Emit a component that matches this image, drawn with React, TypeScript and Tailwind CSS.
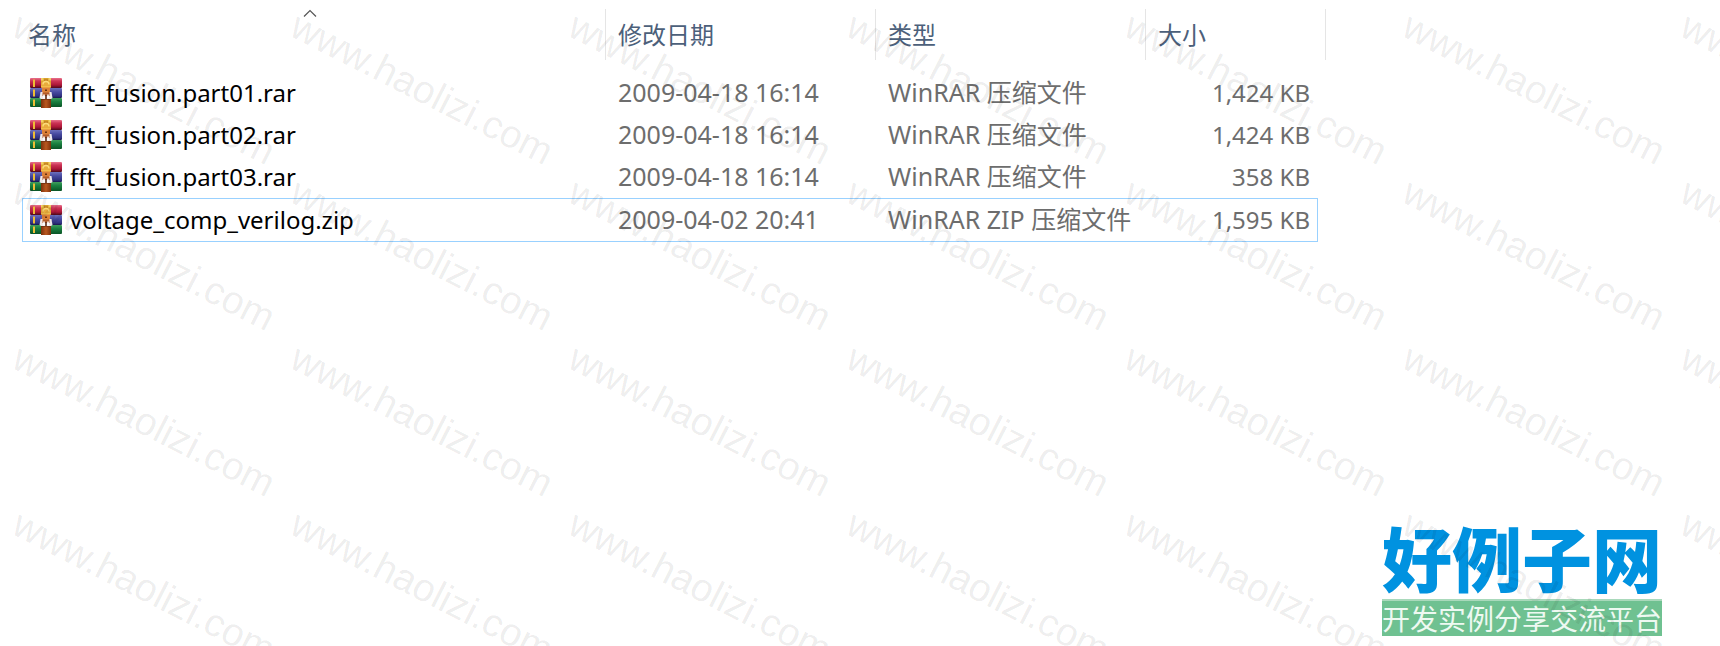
interface FileEntry {
  name: string;
  modified: string;
  type: string;
  size: string;
  focused?: boolean;
}

const files: FileEntry[] = [
  { name: 'fft_fusion.part01.rar', modified: '2009-04-18 16:14', type: 'WinRAR 压缩文件', size: '1,424 KB' },
  { name: 'fft_fusion.part02.rar', modified: '2009-04-18 16:14', type: 'WinRAR 压缩文件', size: '1,424 KB' },
  { name: 'fft_fusion.part03.rar', modified: '2009-04-18 16:14', type: 'WinRAR 压缩文件', size: '358 KB' },
  {
    name: 'voltage_comp_verilog.zip',
    modified: '2009-04-02 20:41',
    type: 'WinRAR ZIP 压缩文件',
    size: '1,595 KB',
    focused: true,
  },
];

const WATERMARK_COUNT = 7 * 4;

function ArchiveIcon() {
  return (
    <svg viewBox="0 0 32 30" className="h-[30px] w-8 shrink-0" aria-hidden="true">
      <defs>
        <linearGradient id="book-red" x1="0" y1="0" x2="0" y2="1">
          <stop offset="0" stopColor="#e8728c" />
          <stop offset="0.3" stopColor="#cc3355" />
          <stop offset="0.7" stopColor="#ab1638" />
          <stop offset="1" stopColor="#4c0a1c" />
        </linearGradient>
        <linearGradient id="book-blue" x1="0" y1="0" x2="0" y2="1">
          <stop offset="0" stopColor="#6d70bd" />
          <stop offset="0.4" stopColor="#474aa0" />
          <stop offset="0.8" stopColor="#303280" />
          <stop offset="1" stopColor="#17174a" />
        </linearGradient>
        <linearGradient id="book-green" x1="0" y1="0" x2="0" y2="1">
          <stop offset="0" stopColor="#3f9d5c" />
          <stop offset="0.4" stopColor="#1a8040" />
          <stop offset="1" stopColor="#0a5426" />
        </linearGradient>
        <linearGradient id="belt" x1="0" y1="0" x2="1" y2="0">
          <stop offset="0" stopColor="#7c310c" />
          <stop offset="0.5" stopColor="#b9581f" />
          <stop offset="1" stopColor="#7c310c" />
        </linearGradient>
      </defs>
      {/* Books */}
      <rect width="32" height="10" rx="1" fill="url(#book-red)" />
      <rect y="10" width="32" height="10" rx="1" fill="url(#book-blue)" />
      <rect y="20" width="32" height="9" rx="1" fill="url(#book-green)" />
      <path d="M3 1.500h2V9H3zM3 11.500h2v7H3zM3 21.500h2V28H3z" fill="#eebd35" />
      {/* Belt */}
      <path d="M11 0h10v9H11z" fill="#dba32f" />
      <path d="M11 0h2.500v2.500H11zM18.500 0H21v2.500h-2.500z" fill="#f2d264" />
      <path d="M14 1.500h4v1.500h-4z" fill="#b4711c" />
      <path d="M11 9.500V7a5 4.500 0 0 1 10 0v2.500z" fill="#e8ab3c" />
      <path d="M13 6.500a3 3 0 0 1 6 0" fill="none" stroke="#fbdc7c" strokeWidth="1.300" />
      <path d="M12 9h8v6.500h-8z" fill="#dd8138" />
      <path d="M11 8h10v1.500H11z" fill="#f2bd4a" />
      <path d="M15 11.500h2V13h-2z" fill="#69300f" />
      <path d="M11 20h10v10H11z" fill="url(#belt)" />
      <path d="M11 20h10v1.500H11z" fill="#5b240b" />
      {/* Buckle */}
      <path d="M10.500 14h2l1 1.500h5l1-1.500h2l1 6-1.500 1h-10l-1.500-1z" fill="#efe9e9" />
      <path d="M12.500 14.500h7V18h-7z" fill="#b25a28" />
      <path d="M15.200 17h1.600v4h-1.600z" fill="#5d2b17" />
      <path d="M13.200 16.500h1.600v4h-1.600zM17.200 16.500h1.600v4h-1.600z" fill="#fff" />
    </svg>
  );
}

function SortArrow() {
  return (
    <svg viewBox="0 0 14 8" className="absolute top-0 left-72 h-2 w-3.5 -translate-x-1/2" aria-hidden="true">
      <path d="M1 7.500 7 1.500l6 6" fill="none" stroke="#555" strokeWidth="1.200" />
    </svg>
  );
}

function FileRow({ file }: { file: FileEntry }) {
  const edge = file.focused ? 'h-11 border-y border-[#99d1ff]' : 'h-[42px]';

  return (
    <tr className="text-[#6d6d6d]">
      <td className={`${edge} ${file.focused ? 'border-l pl-[7px]' : 'pl-2'}`}>
        <div className="flex items-center gap-2 text-black">
          <ArchiveIcon />
          <span>{file.name}</span>
        </div>
      </td>
      <td className={`${edge} pl-3 text-[25px]`}>{file.modified}</td>
      <td className={`${edge} pl-3 text-[25px]`}>{file.type}</td>
      <td className={`${edge} text-right ${file.focused ? 'border-r pr-[7px]' : 'pr-2'}`}>{file.size}</td>
    </tr>
  );
}

function FileTable() {
  return (
    <table className="w-[1304px] table-fixed border-separate border-spacing-0 text-left whitespace-nowrap">
      <colgroup>
        <col className="w-[584px]" />
        <col className="w-[270px]" />
        <col className="w-[270px]" />
        <col className="w-[172px]" />
        <col className="w-2" />
      </colgroup>
      <thead className="text-[#4c607a]">
        <tr>
          <th aria-sort="ascending" className="relative h-[51px] border-r border-[#e5e5e5] pl-1.5 font-normal">
            <SortArrow />
            <button type="button">名称</button>
          </th>
          <th className="border-r border-[#e5e5e5] pl-3 font-normal">
            <button type="button">修改日期</button>
          </th>
          <th className="border-r border-[#e5e5e5] pl-3 font-normal">
            <button type="button">类型</button>
          </th>
          <th colSpan={2} className="border-r border-[#e5e5e5] pl-3 font-normal">
            <button type="button">大小</button>
          </th>
        </tr>
      </thead>
      <tbody className="before:block before:h-3">
        {files.map((file) => (
          <FileRow key={file.name} file={file} />
        ))}
      </tbody>
    </table>
  );
}

function SiteLogo() {
  return (
    <footer className="mt-auto mr-[58px] mb-2.5 w-[280px] self-end text-center whitespace-nowrap">
      <div className="text-[70px] leading-[78px] font-black text-[#0092e0]">好例子网</div>
      <div className="flex h-[37px] items-center justify-center border-t-2 border-[#a9d9bb] bg-[#6fc191] text-[28px] leading-8 text-[#eef9f2]">
        开发实例分享交流平台
      </div>
    </footer>
  );
}

function Watermark() {
  return (
    <div
      aria-hidden="true"
      className="pointer-events-none absolute inset-0 grid auto-rows-[166px] grid-cols-[repeat(7,278px)] overflow-hidden"
    >
      {Array.from({ length: WATERMARK_COUNT }, (_, i) => (
        <div key={i} className="pl-1.5">
          <span className="block w-max origin-bottom-left rotate-[27deg] font-['Liberation_Sans',sans-serif] text-[39px] leading-[42px] text-black/8">
            www.haolizi.com
          </span>
        </div>
      ))}
    </div>
  );
}

export default function App() {
  return (
    <main className="relative flex min-h-screen flex-col overflow-hidden bg-white pt-[9px] font-['Noto_Sans','Noto_Sans_CJK_SC',sans-serif] text-2xl">
      <div className="pl-[22px]">
        <FileTable />
      </div>
      <SiteLogo />
      <Watermark />
    </main>
  );
}
